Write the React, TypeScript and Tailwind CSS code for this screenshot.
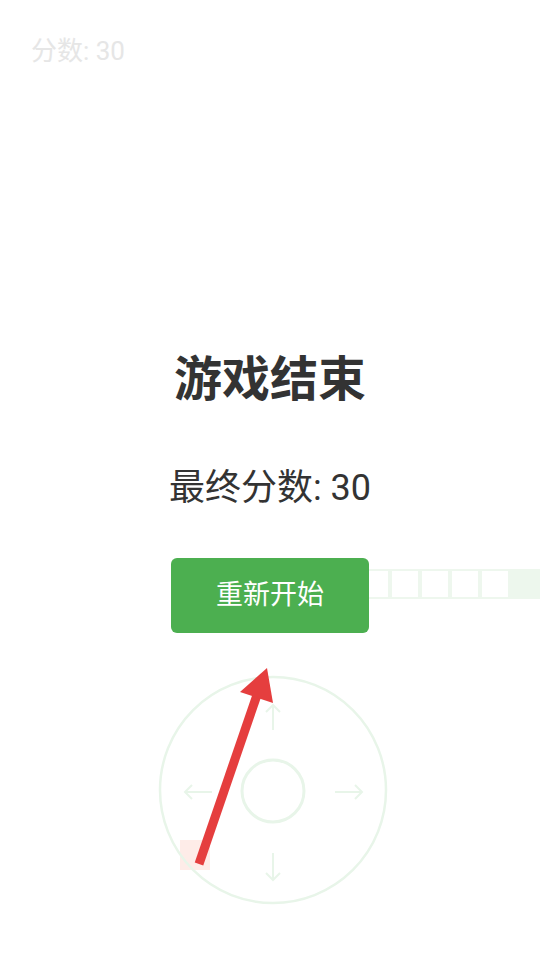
const font = { fontFamily: 'Roboto, "Noto Sans CJK SC", sans-serif' };

const body = [0, 1, 2, 3, 4];

function Joystick() {
  return (
    <div className="absolute left-[158px] top-[675px] h-[230px] w-[230px]">
      <svg width="230" height="230" viewBox="0 0 230 230" fill="none" stroke="#e8f5e9" strokeWidth="2.5">
        <circle cx="115" cy="115" r="113" />
        <circle cx="115" cy="116" r="31" strokeWidth="3" />
        {/* up */}
        <path d="M115 30 V55 M108 37 L115 30 L122 37" strokeWidth="2" />
        {/* down */}
        <path d="M115 178 V205 M108 198 L115 205 L122 198" strokeWidth="2" />
        {/* left */}
        <path d="M27 117 H54 M34 110 L27 117 L34 124" strokeWidth="2" />
        {/* right */}
        <path d="M177 117 H204 M197 110 L204 117 L197 124" strokeWidth="2" />
      </svg>
    </div>
  );
}

export default function App() {
  return (
    <div className="relative h-[960px] w-[540px] overflow-hidden bg-white" style={font}>
      <div className="px-[31px] pt-[33px] text-[26px] leading-[36px] text-[#e6e6e6]">分数: 30</div>

      {/* snake on the board */}
      <div className="absolute left-[360px] top-[569px] flex">
        {body.map((i) => (
          <div key={i} className="h-[30px] w-[30px] border-2 border-[#eef7ee] bg-white" />
        ))}
        <div className="h-[30px] w-[30px] bg-[#edf7ed]" />
      </div>
      {/* food */}
      <div className="absolute left-[180px] top-[840px] h-[30px] w-[30px] bg-[#feece8]" />

      <Joystick />

      <div className="absolute inset-0 flex flex-col items-center justify-center pt-[24px]">
        <h1 className="text-[48px] font-bold leading-[58px] text-[#333]">游戏结束</h1>
        <p className="mt-[57px] text-[36px] leading-[44px] text-[#333]">最终分数: 30</p>
        <button
          type="button"
          className="mt-[48px] h-[75px] w-[198px] rounded-md bg-[#4caf50] text-[27px] text-white"
        >
          重新开始
        </button>
      </div>

      <svg className="pointer-events-none absolute left-0 top-0" width="540" height="960">
        <line x1="199" y1="864" x2="257" y2="695" stroke="#e53e3e" strokeWidth="9" />
        <polygon points="267,668 240,692 273,703" fill="#e53e3e" />
      </svg>
    </div>
  );
}
